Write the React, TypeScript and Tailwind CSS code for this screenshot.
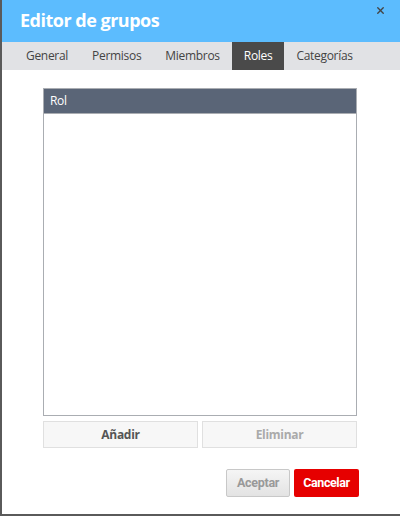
import { X } from "lucide-react";

const tabs = ["General", "Permisos", "Miembros", "Roles", "Categorías"];

export default function App() {
  return (
    <div className="flex h-[516px] w-[400px] flex-col border-b-2 border-l-2 border-[#5a5a5a] bg-white font-['Open_Sans',sans-serif]">
      <div className="relative h-[42px] bg-[#5cbcfe] pl-[18px] pt-[7px]">
        <h1 className="text-[18px] font-bold leading-[26px] tracking-[-0.5px] text-white">Editor de grupos</h1>
        <X className="absolute right-[14px] top-[5px] h-[11px] w-[11px] text-[#444]" strokeWidth={3} />
      </div>
      <div className="flex h-[28px] bg-[#e1e2e5] pl-[12px]">
        {tabs.map((tab) => (
          <div
            key={tab}
            className={`flex items-center px-[12px] text-[12px] tracking-[-0.3px] ${
              tab === "Roles" ? "bg-[#4a4a4a] text-white" : "text-[#444]"
            }`}
          >
            {tab}
          </div>
        ))}
      </div>
      <div className="flex flex-col pl-[41px] pr-[43px] pt-[18px]">
        <div className="flex h-[328px] flex-col border border-[#aaadb2]">
          <div className="flex h-[25px] items-center border-b border-[#aaadb2] bg-[#5a6577] px-[6px] text-[12px] tracking-[-0.3px] text-white">
            Rol
          </div>
          <div className="flex-1" />
        </div>
        <div className="mt-[5px] flex gap-[4px]">
          <button
            type="button"
            className="h-[27px] flex-1 border border-[#e0e0e0] bg-[#f7f7f7] text-[12px] font-bold tracking-[-0.3px] text-[#555]"
          >
            Añadir
          </button>
          <button
            type="button"
            className="h-[27px] flex-1 border border-[#e0e0e0] bg-[#f7f7f7] text-[12px] font-bold tracking-[-0.3px] text-[#aaa]"
          >
            Eliminar
          </button>
        </div>
        <div className="mt-[21px] flex justify-end gap-[4px]">
          <button
            type="button"
            className="h-[28px] w-[64px] rounded-[2px] border border-[#c8c8c8] bg-gradient-to-b from-[#f5f5f5] to-[#e3e3e3] font-['Roboto',sans-serif] text-[12.5px] font-bold tracking-[-0.3px] text-[#999]"
          >
            Aceptar
          </button>
          <button
            type="button"
            className="mr-[-2px] h-[28px] w-[65px] rounded-[2px] bg-[#e60000] font-['Roboto',sans-serif] text-[12.5px] font-bold tracking-[-0.4px] text-white"
          >
            Cancelar
          </button>
        </div>
      </div>
    </div>
  );
}
